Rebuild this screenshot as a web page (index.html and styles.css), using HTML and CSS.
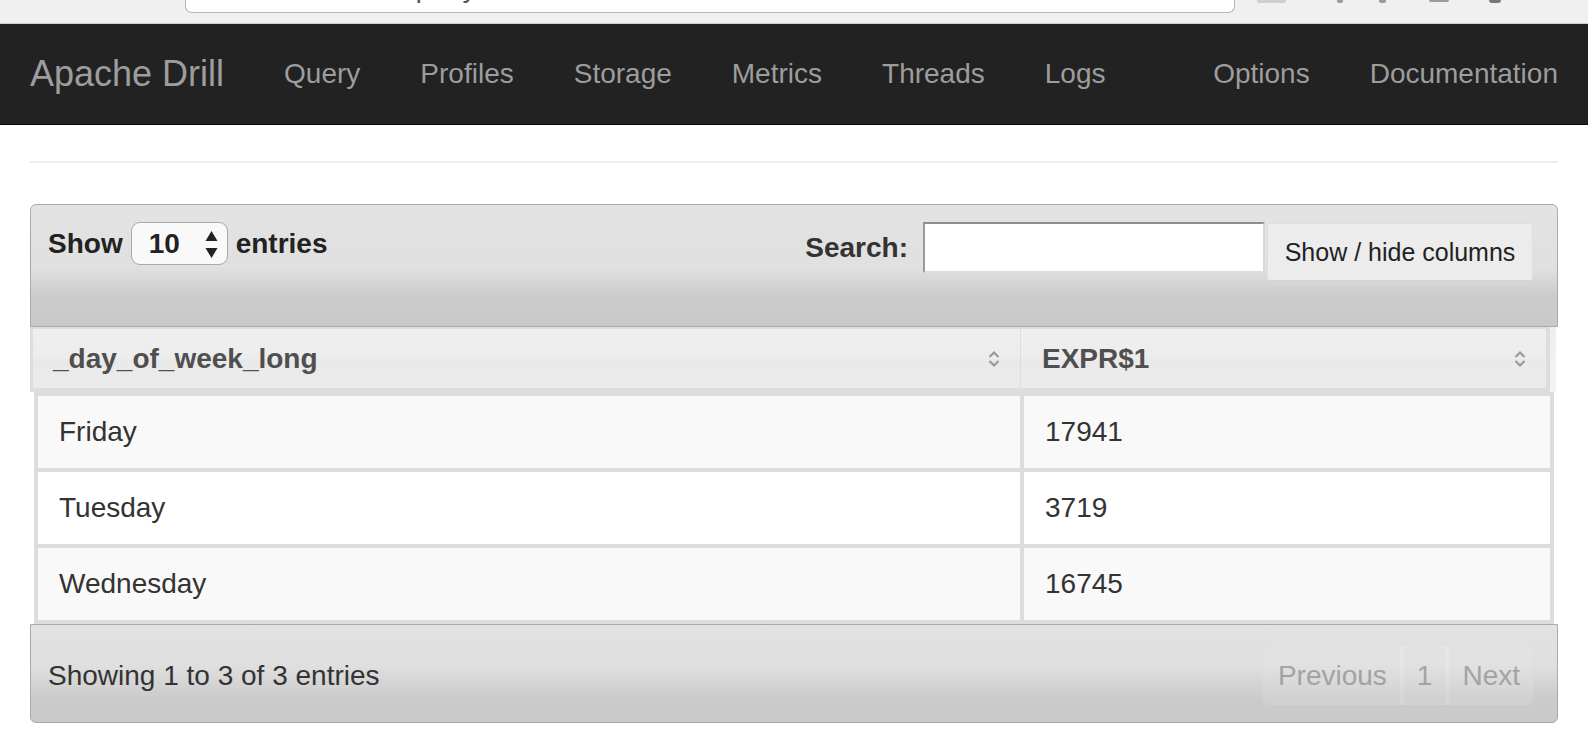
FILE: index.html
```html
<!DOCTYPE html>
<html lang="en">
<head>
<meta charset="utf-8">
<title>Apache Drill</title>
<link rel="stylesheet" href="styles.css">
</head>
<body>
<div class="browserbar">
  <div class="urlbox"><span class="urltext">localhost:8047/query</span></div>
  <div class="tools">
    <span class="tool t1"></span>
    <span class="tool t2"></span>
    <span class="tool t3"></span>
    <span class="tool t4"></span>
    <span class="tool t5"></span>
  </div>
</div>
<nav class="navbar">
  <a class="brand" href="#">Apache Drill</a>
  <ul class="nav">
    <li><a href="#">Query</a></li>
    <li><a href="#">Profiles</a></li>
    <li><a href="#">Storage</a></li>
    <li><a href="#">Metrics</a></li>
    <li><a href="#">Threads</a></li>
    <li><a href="#">Logs</a></li>
  </ul>
  <ul class="nav nav-right">
    <li><a href="#">Options</a></li>
    <li><a href="#">Documentation</a></li>
  </ul>
</nav>
<main class="container">
  <hr class="divider">
  <div class="dt-wrapper">
    <div class="dt-toolbar dt-top">
      <div class="dt-length">
        <span>Show</span>
        <span class="select">10
          <svg class="select-arrows" width="13" height="27" viewBox="0 0 13 27"><polygon points="6.5,0 12.5,10 0.5,10" fill="#222"/><polygon points="0.5,17 12.5,17 6.5,27" fill="#222"/></svg>
        </span>
        <span>entries</span>
      </div>
      <div class="dt-right">
        <div class="dt-search">
          <label>Search:</label>
          <span class="search-input"></span>
        </div>
        <span class="colvis">Show / hide columns</span>
      </div>
    </div>
    <div class="dt-head">
      <div class="thead-row">
        <div class="th"><span>_day_of_week_long</span>
          <svg class="sort" width="14" height="20" viewBox="0 0 14 20"><polyline points="2.5,8 7,3.5 11.5,8" fill="none" stroke="#9a9a9a" stroke-width="2.2"/><polyline points="2.5,12 7,16.5 11.5,12" fill="none" stroke="#9a9a9a" stroke-width="2.2"/></svg>
        </div>
        <div class="th"><span>EXPR$1</span>
          <svg class="sort" width="14" height="20" viewBox="0 0 14 20"><polyline points="2.5,8 7,3.5 11.5,8" fill="none" stroke="#9a9a9a" stroke-width="2.2"/><polyline points="2.5,12 7,16.5 11.5,12" fill="none" stroke="#9a9a9a" stroke-width="2.2"/></svg>
        </div>
      </div>
      <div class="head-gutter"></div>
    </div>
    <div class="tbody">
      <div class="td odd">Friday</div><div class="td odd">17941</div>
      <div class="td even">Tuesday</div><div class="td even">3719</div>
      <div class="td odd">Wednesday</div><div class="td odd">16745</div>
    </div>
    <div class="dt-toolbar dt-bottom">
      <div class="dt-info">Showing 1 to 3 of 3 entries</div>
      <div class="pager">
        <span class="pg">Previous</span>
        <span class="pg">1</span>
        <span class="pg">Next</span>
      </div>
    </div>
  </div>
</main>
</body>
</html>
```

FILE: styles.css
```css
* { box-sizing: border-box; }
html, body { margin: 0; padding: 0; }
body {
  width: 1588px;
  height: 735px;
  overflow: hidden;
  font-family: "Liberation Sans", Arial, Helvetica, sans-serif;
  font-size: 28px;
  line-height: 40px;
  color: #333;
  background: #fff;
}

/* browser chrome strip */
.browserbar {
  height: 24px;
  background: #f0f0f0;
  border-bottom: 1px solid #cfcfcf;
  display: flex;
  align-items: flex-start;
  overflow: hidden;
}
.urlbox {
  margin-left: 185px;
  width: 1050px;
  height: 13px;
  background: #fff;
  border: 1px solid #b5b5b5;
  border-top: 0;
  border-radius: 0 0 7px 7px;
  overflow: hidden;
  padding-left: 32px;
}
.urltext {
  display: block;
  margin-top: -26px;
  font-size: 28px;
  line-height: 28px;
  color: #555;
  white-space: nowrap;
}
.tools { display: flex; align-items: flex-start; }
.tool { display: block; height: 3px; background: #bdbdbd; border-radius: 0 0 2px 2px; }
.t1 { margin-left: 22px; width: 29px; background: #cfcfcf; }
.t2 { margin-left: 51px; width: 6px; background: #9a9a9a; }
.t3 { margin-left: 36px; width: 7px; background: #9a9a9a; }
.t4 { margin-left: 43px; width: 20px; background: #9a9a9a; height: 2px; }
.t5 { margin-left: 40px; width: 12px; background: #777; height: 3px; border-radius: 0 0 6px 6px; }

/* navbar */
.navbar {
  height: 101px;
  background: #222;
  border-bottom: 1px solid #080808;
  display: flex;
  align-items: center;
}
.brand {
  padding: 0 30px;
  font-size: 36px;
  line-height: 40px;
  color: #9d9d9d;
  text-decoration: none;
}
.nav {
  display: flex;
  list-style: none;
  margin: 0;
  padding: 0;
}
.nav a {
  display: block;
  padding: 0 30px;
  font-size: 28px;
  line-height: 40px;
  color: #9d9d9d;
  text-decoration: none;
}
.nav-right { margin-left: auto; }

/* content */
.container { padding: 0 30px; }
.divider {
  margin: 36px 0 41px;
  border: 0;
  border-top: 2px solid #eee;
  height: 0;
}

.dt-toolbar {
  border: 1px solid #aaa;
  display: flex;
  justify-content: space-between;
}
.dt-top {
  height: 123px;
  border-radius: 6px 6px 0 0;
  align-items: flex-start;
  padding: 17px 24px 0 17px;
  color: #222;
  font-weight: bold;
  background: linear-gradient(to bottom, #e3e3e3 0%, #e0e0e0 52%, #cbcbcb 76%, #c9c9c9 100%);
}
.dt-length {
  display: flex;
  align-items: center;
  gap: 8px;
}
.select {
  display: flex;
  align-items: center;
  justify-content: space-between;
  width: 97px;
  height: 43px;
  padding: 0 9px 0 17px;
  border: 1px solid #a9a9a9;
  border-radius: 9px;
  background: #f9f9f9;
  color: #222;
}
.select-arrows { display: block; margin-top: 1px; }
.dt-right { display: flex; align-items: flex-start; }
.dt-search {
  display: flex;
  align-items: center;
  gap: 15px;
  color: #333;
}
.search-input {
  display: block;
  width: 342px;
  height: 51px;
  background: #fff;
  border: 2px solid;
  border-color: #8e8e8e #d8d8d8 #dcdcdc #9a9a9a;
}
.colvis {
  display: block;
  margin: 1px 0 0 2px;
  width: 266px;
  height: 58px;
  line-height: 56px;
  text-align: center;
  font-size: 25px;
  font-weight: normal;
  color: #222;
  background: #ececec;
  border: 1px solid #dedede;
  border-bottom-color: #d2d2d2;
  border-radius: 2px;
}

/* header */
.dt-head { display: flex; }
.thead-row {
  width: 1520px;
  display: grid;
  grid-template-columns: 987px 525px;
  column-gap: 1px;
  background: #ddd;
  border-style: solid;
  border-color: #ddd;
  border-width: 2px 4px 4px 3px;
}
.th {
  height: 59px;
  display: flex;
  align-items: center;
  justify-content: space-between;
  padding: 1px 19px 0 20px;
  font-weight: bold;
  color: #4f4f4f;
  background: linear-gradient(to bottom, #eeeeee 0%, #ededed 50%, #e9e9e9 50%, #ebebeb 100%);
}
.th:nth-child(2) { padding-left: 21px; }
.sort { display: block; }
.head-gutter {
  width: 6px;
  background: linear-gradient(to bottom, #eeeeee, #f4f4f4);
}

/* body */
.tbody {
  margin-left: 4px;
  width: 1520px;
  display: grid;
  grid-template-columns: 982px 526px;
  gap: 4px;
  background: #ddd;
  border: 4px solid #ddd;
}
.td {
  height: 72px;
  padding: 16px 21px;
  color: #333;
}
.odd { background: #f9f9f9; }
.even { background: #fff; }

/* footer */
.dt-bottom {
  height: 99px;
  border-radius: 0 0 6px 6px;
  align-items: center;
  padding: 4px 24px 0 17px;
  color: #333;
  background: linear-gradient(to bottom, #e2e2e2 0%, #dfdfdf 42%, #cbcbcb 76%, #c9c9c9 100%);
}
.pager {
  display: flex;
  gap: 4px;
  height: 59px;
  border-radius: 6px;
  background: rgba(255, 255, 255, 0.2);
  overflow: hidden;
}
.pg {
  display: flex;
  align-items: center;
  padding: 0 13px;
  color: #a3a3a3;
  background: rgba(0, 0, 0, 0.015);
}
.pg:first-child { padding: 0 13px 0 15px; }
```
